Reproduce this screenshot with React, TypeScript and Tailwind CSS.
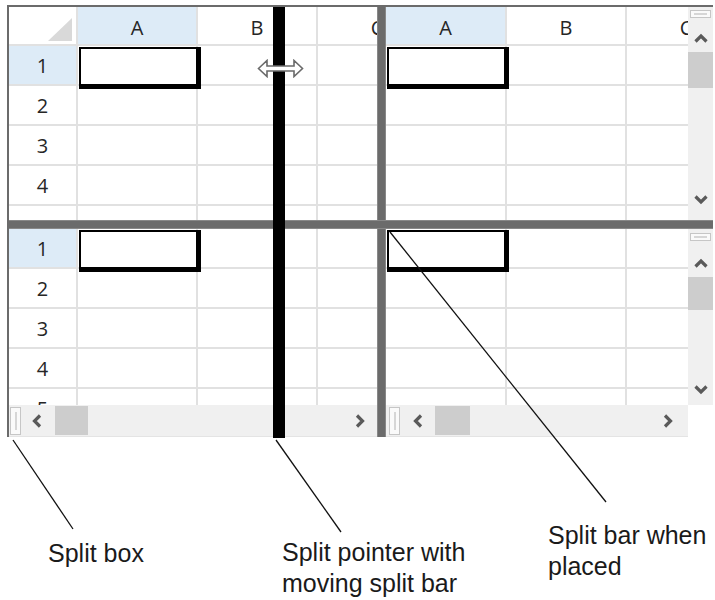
import React from "react";

const GRID = "border-[#e1e1e1]";

function Chev({ dir }: { dir: "up" | "down" | "left" | "right" }) {
  const pts: Record<string, string> = {
    up: "1.5,10.5 7,5 12.5,10.5",
    down: "1.5,3.5 7,9 12.5,3.5",
    left: "10,1.5 4.5,7 10,12.5",
    right: "4,1.5 9.5,7 4,12.5",
  };
  return (
    <svg width="14" height="14" viewBox="0 0 14 14">
      <polyline points={pts[dir]} fill="none" stroke="#5a5a5a" strokeWidth="3.2" />
    </svg>
  );
}

function HeaderRow({ corner, widths, labels }: { corner: boolean; widths: number[]; labels: string[] }) {
  return (
    <div className="flex h-[39px] shrink-0">
      {corner && (
        <div className="relative w-[69px] shrink-0 border-r-2 border-b-2 border-[#e1e1e1] bg-white">
          <svg className="absolute left-[39px] top-[11px]" width="24" height="23" viewBox="0 0 24 23">
            <polygon points="24,0 24,23 0,23" fill="#d9d9d9" />
          </svg>
        </div>
      )}
      {labels.map((c, i) => (
        <div
          key={i}
          style={{ width: widths[i] }}
          className={`shrink-0 border-r-2 border-b-2 border-[#e1e1e1] flex justify-center pt-[9px] text-[20px] leading-[24px] text-[#262626] ${
            i === 0 ? "bg-[#ddebf7]" : "bg-white"
          }`}
        >
          {c}
        </div>
      ))}
    </div>
  );
}

function Row({
  num,
  rowHeader,
  widths,
  selected,
  partial,
}: {
  num: string;
  rowHeader: boolean;
  widths: number[];
  selected?: boolean;
  partial?: boolean;
}) {
  return (
    <div className="flex h-[40px] shrink-0">
      {rowHeader && (
        <div
          className={`w-[69px] shrink-0 border-r-2 ${partial ? "" : "border-b-2"} ${GRID} flex justify-center pt-[8px] text-[20px] leading-[24px] text-[#262626] ${
            num === "1" ? "bg-[#ddebf7]" : "bg-white"
          }`}
        >
          {num}
        </div>
      )}
      {widths.map((w, i) => (
        <div
          key={i}
          style={{ width: w }}
          className={`relative shrink-0 border-r-2 ${partial ? "" : "border-b-2"} ${GRID} bg-white`}
        >
          {selected && i === 0 && (
            <div className="absolute left-[1px] top-[1px] z-10 w-[122px] h-[42px] border-t-2 border-l-2 border-r-[5px] border-b-[5px] border-black bg-white" />
          )}
        </div>
      ))}
    </div>
  );
}

function Pane({
  rowHeader,
  header,
  widths,
  width,
  height,
  lastLabel,
}: {
  rowHeader: boolean;
  header: boolean;
  widths: number[];
  width: number;
  height: number;
  lastLabel: string;
}) {
  return (
    <div style={{ width, height }} className="shrink-0 overflow-hidden flex flex-col bg-white">
      {header && <HeaderRow corner={rowHeader} widths={widths} labels={["A", "B", "C"]} />}
      <Row num="1" rowHeader={rowHeader} widths={widths} selected />
      <Row num="2" rowHeader={rowHeader} widths={widths} />
      <Row num="3" rowHeader={rowHeader} widths={widths} />
      <Row num="4" rowHeader={rowHeader} widths={widths} />
      <Row num={lastLabel} rowHeader={rowHeader} widths={widths} partial />
    </div>
  );
}

function VSplitBox() {
  return (
    <div className="mx-[2px] h-[8px] border border-[#c6c6c6] bg-[#fafafa] flex items-center px-[3px]">
      <div className="h-[2px] w-full bg-[#d6d6d6]" />
    </div>
  );
}

function HSplitBox() {
  return (
    <div className="w-[11px] h-[28px] border border-[#c6c6c6] bg-[#fafafa] flex justify-center py-[4px]">
      <div className="w-[2px] h-full bg-[#d6d6d6]" />
    </div>
  );
}

function VScroll({ top }: { top: boolean }) {
  return (
    <div className="w-[25px] h-full shrink-0 bg-[#f0f0f0] flex flex-col">
      <div className={top ? "h-[17px] pt-[3px]" : "h-[20px] pt-[4px]"}>
        <VSplitBox />
      </div>
      <div className={`${top ? "h-[28px]" : "h-[28px]"} flex items-center justify-center`}>
        <Chev dir="up" />
      </div>
      <div className={`${top ? "h-[36px]" : "h-[33px]"} bg-[#cdcdcd]`} />
      <div className="flex-1" />
      <div className={`h-[26px] ${top ? "mb-[7px]" : "mb-[2px]"} flex items-center justify-center`}>
        <Chev dir="down" />
      </div>
    </div>
  );
}

function HScroll({ left }: { left: boolean }) {
  return (
    <div className="h-[32px] w-full bg-[#f0f0f0] flex items-center border-b border-[#e4e4e4]">
      <div className={`${left ? "w-[14px] pl-[1px]" : "w-[18px] pl-[3px]"} h-full flex items-center`}>
        <HSplitBox />
      </div>
      <div className="w-[28px] h-full flex items-center justify-center">
        <Chev dir="left" />
      </div>
      <div className={`${left ? "ml-[4px] w-[33px]" : "ml-[3px] w-[35px]"} h-[29px] bg-[#cdcdcd]`} />
      <div className="flex-1" />
      <div className={`w-[28px] ${left ? "mr-[3px]" : "mr-[6px]"} h-full flex items-center justify-center`}>
        <Chev dir="right" />
      </div>
    </div>
  );
}

function SplitBarV() {
  return <div className="w-[9px] h-full shrink-0 bg-[#6b6b6b] border-x border-[#888888]" />;
}

export default function App() {
  const leftW = [120, 120, 120];
  const rightW = [121, 120, 120];
  return (
    <div
      className="relative w-[715px] h-[600px] bg-white overflow-hidden"
      style={{ fontFamily: '"Open Sans", "Liberation Sans", sans-serif' }}
    >
      <div className="pt-[5px] pl-[7px]">
        <div className="w-[706px] border-t-2 border-l-2 border-[#6b6b6b] flex flex-col">
          {/* top row */}
          <div className="flex h-[213px]">
            <Pane rowHeader header widths={leftW} width={368} height={213} lastLabel="" />
            <SplitBarV />
            <Pane rowHeader={false} header widths={rightW} width={302} height={213} lastLabel="" />
            <VScroll top />
          </div>
          {/* horizontal split bar */}
          <div className="h-[9px] w-full bg-[#6b6b6b] border-y border-[#888888]" />
          {/* bottom row */}
          <div className="flex h-[208px]">
            <div className="w-[368px] shrink-0 flex flex-col">
              <Pane rowHeader header={false} widths={leftW} width={368} height={176} lastLabel="5" />
              <HScroll left />
            </div>
            <SplitBarV />
            <div className="w-[327px] shrink-0 flex flex-col">
              <div className="flex h-[176px]">
                <Pane rowHeader={false} header={false} widths={rightW} width={302} height={176} lastLabel="5" />
                <VScroll top={false} />
              </div>
              <div className="flex">
                <div className="w-[302px]">
                  <HScroll left={false} />
                </div>
                <div className="w-[25px] h-[32px] bg-white" />
              </div>
            </div>
          </div>
        </div>
      </div>

      {/* moving split bar */}
      <div className="absolute left-[273px] top-[7px] w-[12px] h-[431px] bg-black z-20" />

      {/* split pointer cursor */}
      <svg className="absolute left-[257px] top-[59px] z-30" width="47" height="19" viewBox="0 0 47 19">
        <path
          d="M1.5 9.5 L10 1.5 L10 7 L37 7 L37 1.5 L45.5 9.5 L37 17.5 L37 12 L10 12 L10 17.5 Z"
          fill="#ffffff"
          stroke="#6a6a6a"
          strokeWidth="1.6"
          strokeLinejoin="miter"
        />
      </svg>

      {/* annotation lines */}
      <svg className="absolute left-0 top-0 z-30" width="715" height="600" viewBox="0 0 715 600">
        <line x1="13" y1="440" x2="73" y2="529" stroke="#111" strokeWidth="1.3" />
        <line x1="276" y1="440" x2="341" y2="532" stroke="#111" strokeWidth="1.3" />
        <line x1="390" y1="232" x2="606" y2="502" stroke="#111" strokeWidth="1.3" />
      </svg>

      {/* labels */}
      <div
        className="absolute left-[48px] top-[538px] text-[25px] leading-[31px] text-[#1a1a1a]"
        style={{ fontFamily: '"Liberation Sans", Arial, sans-serif' }}
      >
        Split box
      </div>
      <div
        className="absolute left-[282px] top-[537px] text-[25px] leading-[31px] text-[#1a1a1a]"
        style={{ fontFamily: '"Liberation Sans", Arial, sans-serif' }}
      >
        <div>Split pointer with</div>
        <div>moving split bar</div>
      </div>
      <div
        className="absolute left-[548px] top-[520px] text-[25px] leading-[31px] text-[#1a1a1a]"
        style={{ fontFamily: '"Liberation Sans", Arial, sans-serif' }}
      >
        <div>Split bar when</div>
        <div>placed</div>
      </div>
    </div>
  );
}
